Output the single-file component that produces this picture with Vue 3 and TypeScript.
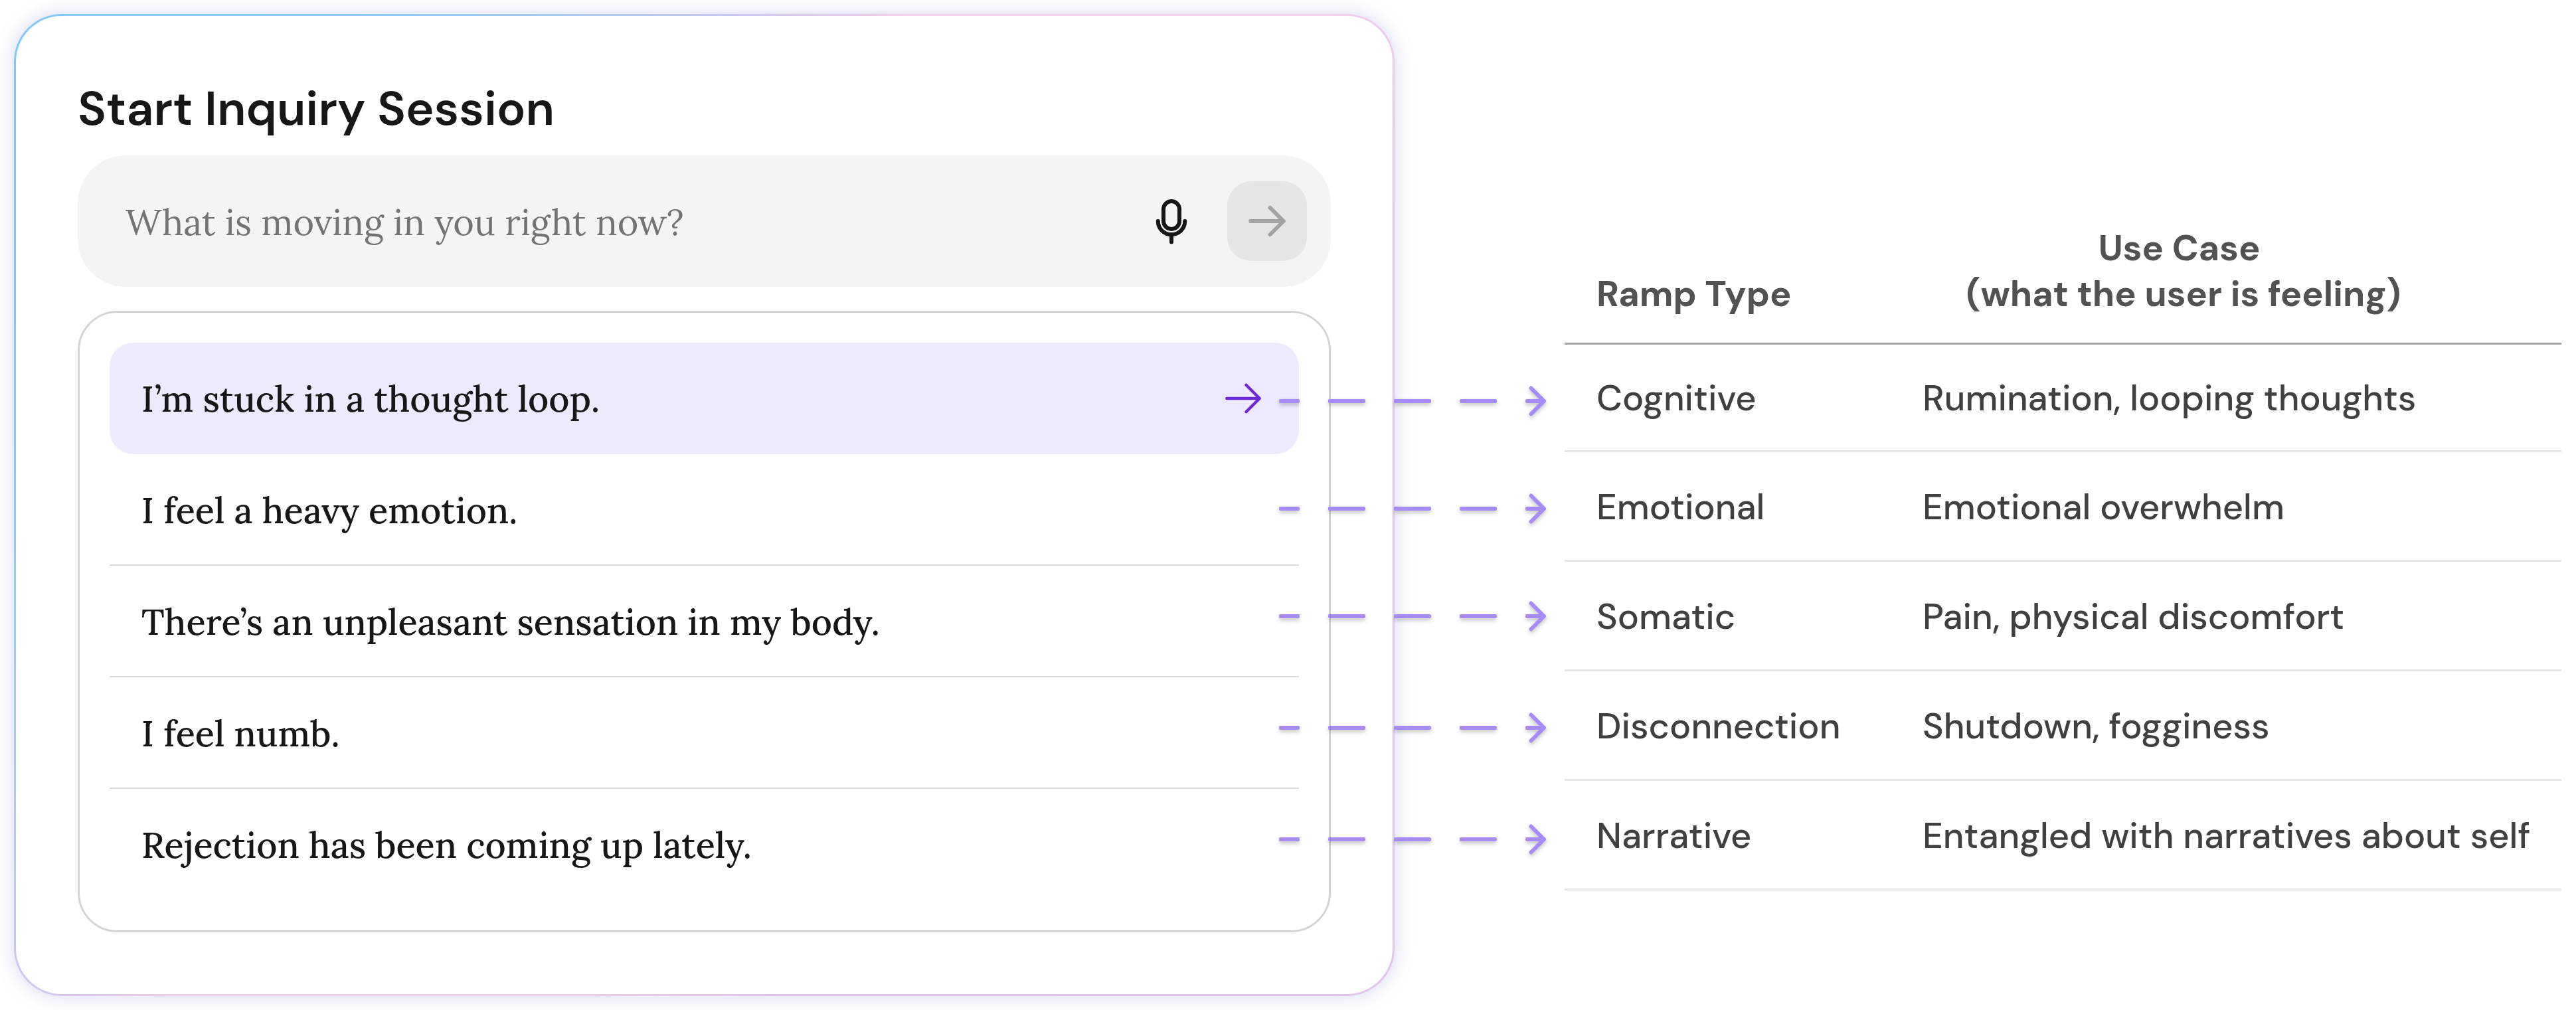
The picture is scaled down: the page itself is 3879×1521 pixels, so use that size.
<script setup lang="ts">
import { ref } from 'vue'

interface Ramp {
  prompt: string
  type: string
  useCase: string
  connectorY: number
}

const ramps: Ramp[] = [
  { prompt: 'I’m stuck in a thought loop.', type: 'Cognitive', useCase: 'Rumination, looping thoughts', connectorY: 30 },
  { prompt: 'I feel a heavy emotion.', type: 'Emotional', useCase: 'Emotional overwhelm', connectorY: 192 },
  { prompt: 'There’s an unpleasant sensation in my body.', type: 'Somatic', useCase: 'Pain, physical discomfort', connectorY: 354 },
  { prompt: 'I feel numb.', type: 'Disconnection', useCase: 'Shutdown, fogginess', connectorY: 522 },
  { prompt: 'Rejection has been coming up lately.', type: 'Narrative', useCase: 'Entangled with narratives about self', connectorY: 690 },
]

const inquiry = ref('')
const selected = ref(0)
</script>

<template>
  <main class="page">
    <section class="card">
      <h1 class="title">Start Inquiry Session</h1>

      <form class="ask" @submit.prevent>
        <input
          v-model="inquiry"
          class="ask-input"
          type="text"
          aria-label="Inquiry"
          placeholder="What is moving in you right now?"
        />
        <button class="mic" type="button" aria-label="Dictate">
          <svg class="icon" viewBox="0 0 24 24" stroke-width="2">
            <rect x="8" y="2" width="8" height="14" rx="4" />
            <path d="M5.25 12a6.75 6.75 0 0 0 13.5 0" />
            <path d="M12 18.75V22.5" />
          </svg>
        </button>
        <button class="send" type="submit" aria-label="Start">
          <svg class="icon" viewBox="0 0 24 24" stroke-width="2">
            <path d="M3.75 12H20.25M13.5 5.25L20.25 12L13.5 18.75" />
          </svg>
        </button>
      </form>

      <ul class="prompts">
        <li v-for="(ramp, i) in ramps" :key="ramp.type">
          <button
            type="button"
            class="prompt"
            :class="{ selected: i === selected }"
            @click="selected = i"
          >
            <span class="prompt-text">{{ ramp.prompt }}</span>
            <svg v-if="i === selected" class="icon" viewBox="0 0 24 24" stroke-width="1.5" aria-hidden="true">
              <path d="M3.75 12H20.25M13.5 5.25L20.25 12L13.5 18.75" />
            </svg>
          </button>
        </li>
      </ul>

      <svg class="connectors" viewBox="0 0 414 720" aria-hidden="true">
        <g v-for="ramp in ramps" :key="ramp.type" :transform="`translate(0 ${ramp.connectorY})`">
          <rect x="0" y="-3" width="31" height="6" rx="2" />
          <rect v-for="n in 3" :key="n" :x="99 * n - 25" y="-3" width="56" height="6" rx="2" />
          <rect x="371" y="-3" width="28" height="6" rx="2" />
          <path d="M379.5 -19.5L399 0L379.5 19.5" />
        </g>
      </svg>
    </section>

    <section class="reference">
      <table class="ramps">
        <thead>
          <tr>
            <th class="type" scope="col">Ramp Type</th>
            <th class="use-case" scope="col">Use Case&nbsp;<br />(what the user is feeling)</th>
          </tr>
        </thead>
        <tbody>
          <tr v-for="ramp in ramps" :key="ramp.type">
            <td>{{ ramp.type }}</td>
            <td>{{ ramp.useCase }}</td>
          </tr>
        </tbody>
      </table>
    </section>
  </main>
</template>

<style>
body {
  margin: 0;
  background: #ffffff;
}
</style>

<style scoped>
*,
*::before,
*::after {
  box-sizing: border-box;
}

.page {
  display: grid;
  grid-template-columns: minmax(0, 2079fr) minmax(0, 1501fr);
  align-items: start;
  gap: 256px;
  padding: 21px 22px 21px 21px;
  font-family: "DM Sans", Inter, "Liberation Sans", sans-serif;
}

.card {
  position: relative;
  padding: 93px;
  border: 3px solid transparent;
  border-radius: 72px;
  background:
    linear-gradient(#ffffff, #ffffff) padding-box,
    linear-gradient(127deg, #82c8f8 0%, #88c9f7 14%, #a9cbf4 26%, #c9c8f0 34%, #f3cde9 42%, #f3cde9 62%, #e5c5ee 72%, #e2c4ee 100%) border-box;
  box-shadow: 0 0 28px 2px rgba(110, 110, 210, 0.24);
}

.title {
  margin: 0 0 24px;
  font-size: 72px;
  font-weight: 600;
  line-height: 93px;
  color: #171717;
}

.ask {
  display: flex;
  align-items: center;
  gap: 48px;
  margin-bottom: 36px;
  padding: 39px 36px 39px 72px;
  border-radius: 72px;
  background: #f4f4f4;
}

.ask-input {
  flex: 1;
  min-width: 0;
  height: 120px;
  padding: 2px 0 0;
  border: 0;
  outline: 0;
  background: transparent;
  font-family: Lora, "Noto Serif", "Liberation Serif", serif;
  font-size: 54px;
  color: #171717;
}

.ask-input::placeholder {
  color: #737373;
  opacity: 1;
}

.icon {
  display: block;
  width: 72px;
  height: 72px;
  fill: none;
  stroke: currentColor;
  stroke-linecap: round;
  stroke-linejoin: round;
}

.mic,
.send {
  display: grid;
  place-items: center;
  padding: 0;
  border: 0;
  background: transparent;
  color: #171717;
}

.send {
  width: 120px;
  height: 120px;
  border-radius: 36px;
  background: #e5e5e5;
  color: #a3a3a3;
}

.prompts {
  margin: 0;
  padding: 45px;
  border: 3px solid #d4d4d4;
  border-radius: 60px;
  list-style: none;
}

.prompt {
  display: flex;
  align-items: center;
  justify-content: space-between;
  width: 100%;
  height: 168px;
  padding: 0 48px;
  border: 0;
  background: transparent;
  font-family: Lora, "Noto Serif", "Liberation Serif", serif;
  font-size: 54px;
  font-weight: 500;
  line-height: 72px;
  text-align: left;
  color: #171717;
}

.prompt-text {
  padding-top: 2px;
}

.prompts li:not(:last-child) .prompt:not(.selected) {
  box-shadow: inset 0 -2px #dadada;
}

.prompt.selected {
  border-radius: 36px;
  background: #ede9fe;
}

.prompt .icon {
  color: #6d28d9;
}

/* Dashed arrows that lead from each prompt to its row in the table */
.connectors {
  position: absolute;
  top: 550px;
  right: -243px;
  width: 414px;
  height: 720px;
  overflow: visible;
  pointer-events: none;
  fill: #a78bfa;
  filter: drop-shadow(0 3px 3px rgba(0, 0, 0, 0.25));
}

.connectors path {
  fill: none;
  stroke: #a78bfa;
  stroke-width: 6;
  stroke-linecap: round;
  stroke-linejoin: round;
}

.reference {
  padding-top: 294px;
}

.ramps {
  width: 100%;
  border-spacing: 0;
  font-size: 54px;
  font-weight: 500;
  line-height: 69px;
  color: #404040;
}

.ramps th {
  padding: 24px 48px 39px;
  border-bottom: 3px solid #a3a3a3;
  font-weight: 700;
  vertical-align: bottom;
  color: #525252;
}

.ramps .type {
  width: 491px;
  text-align: left;
}

.ramps .use-case {
  padding-right: 176px;
  text-align: center;
}

.ramps td {
  height: 165px;
  padding: 2px 24px 0 48px;
  border-bottom: 3px solid #e5e5e5;
}

.ramps tbody tr:first-child td {
  height: 162px;
}
</style>
